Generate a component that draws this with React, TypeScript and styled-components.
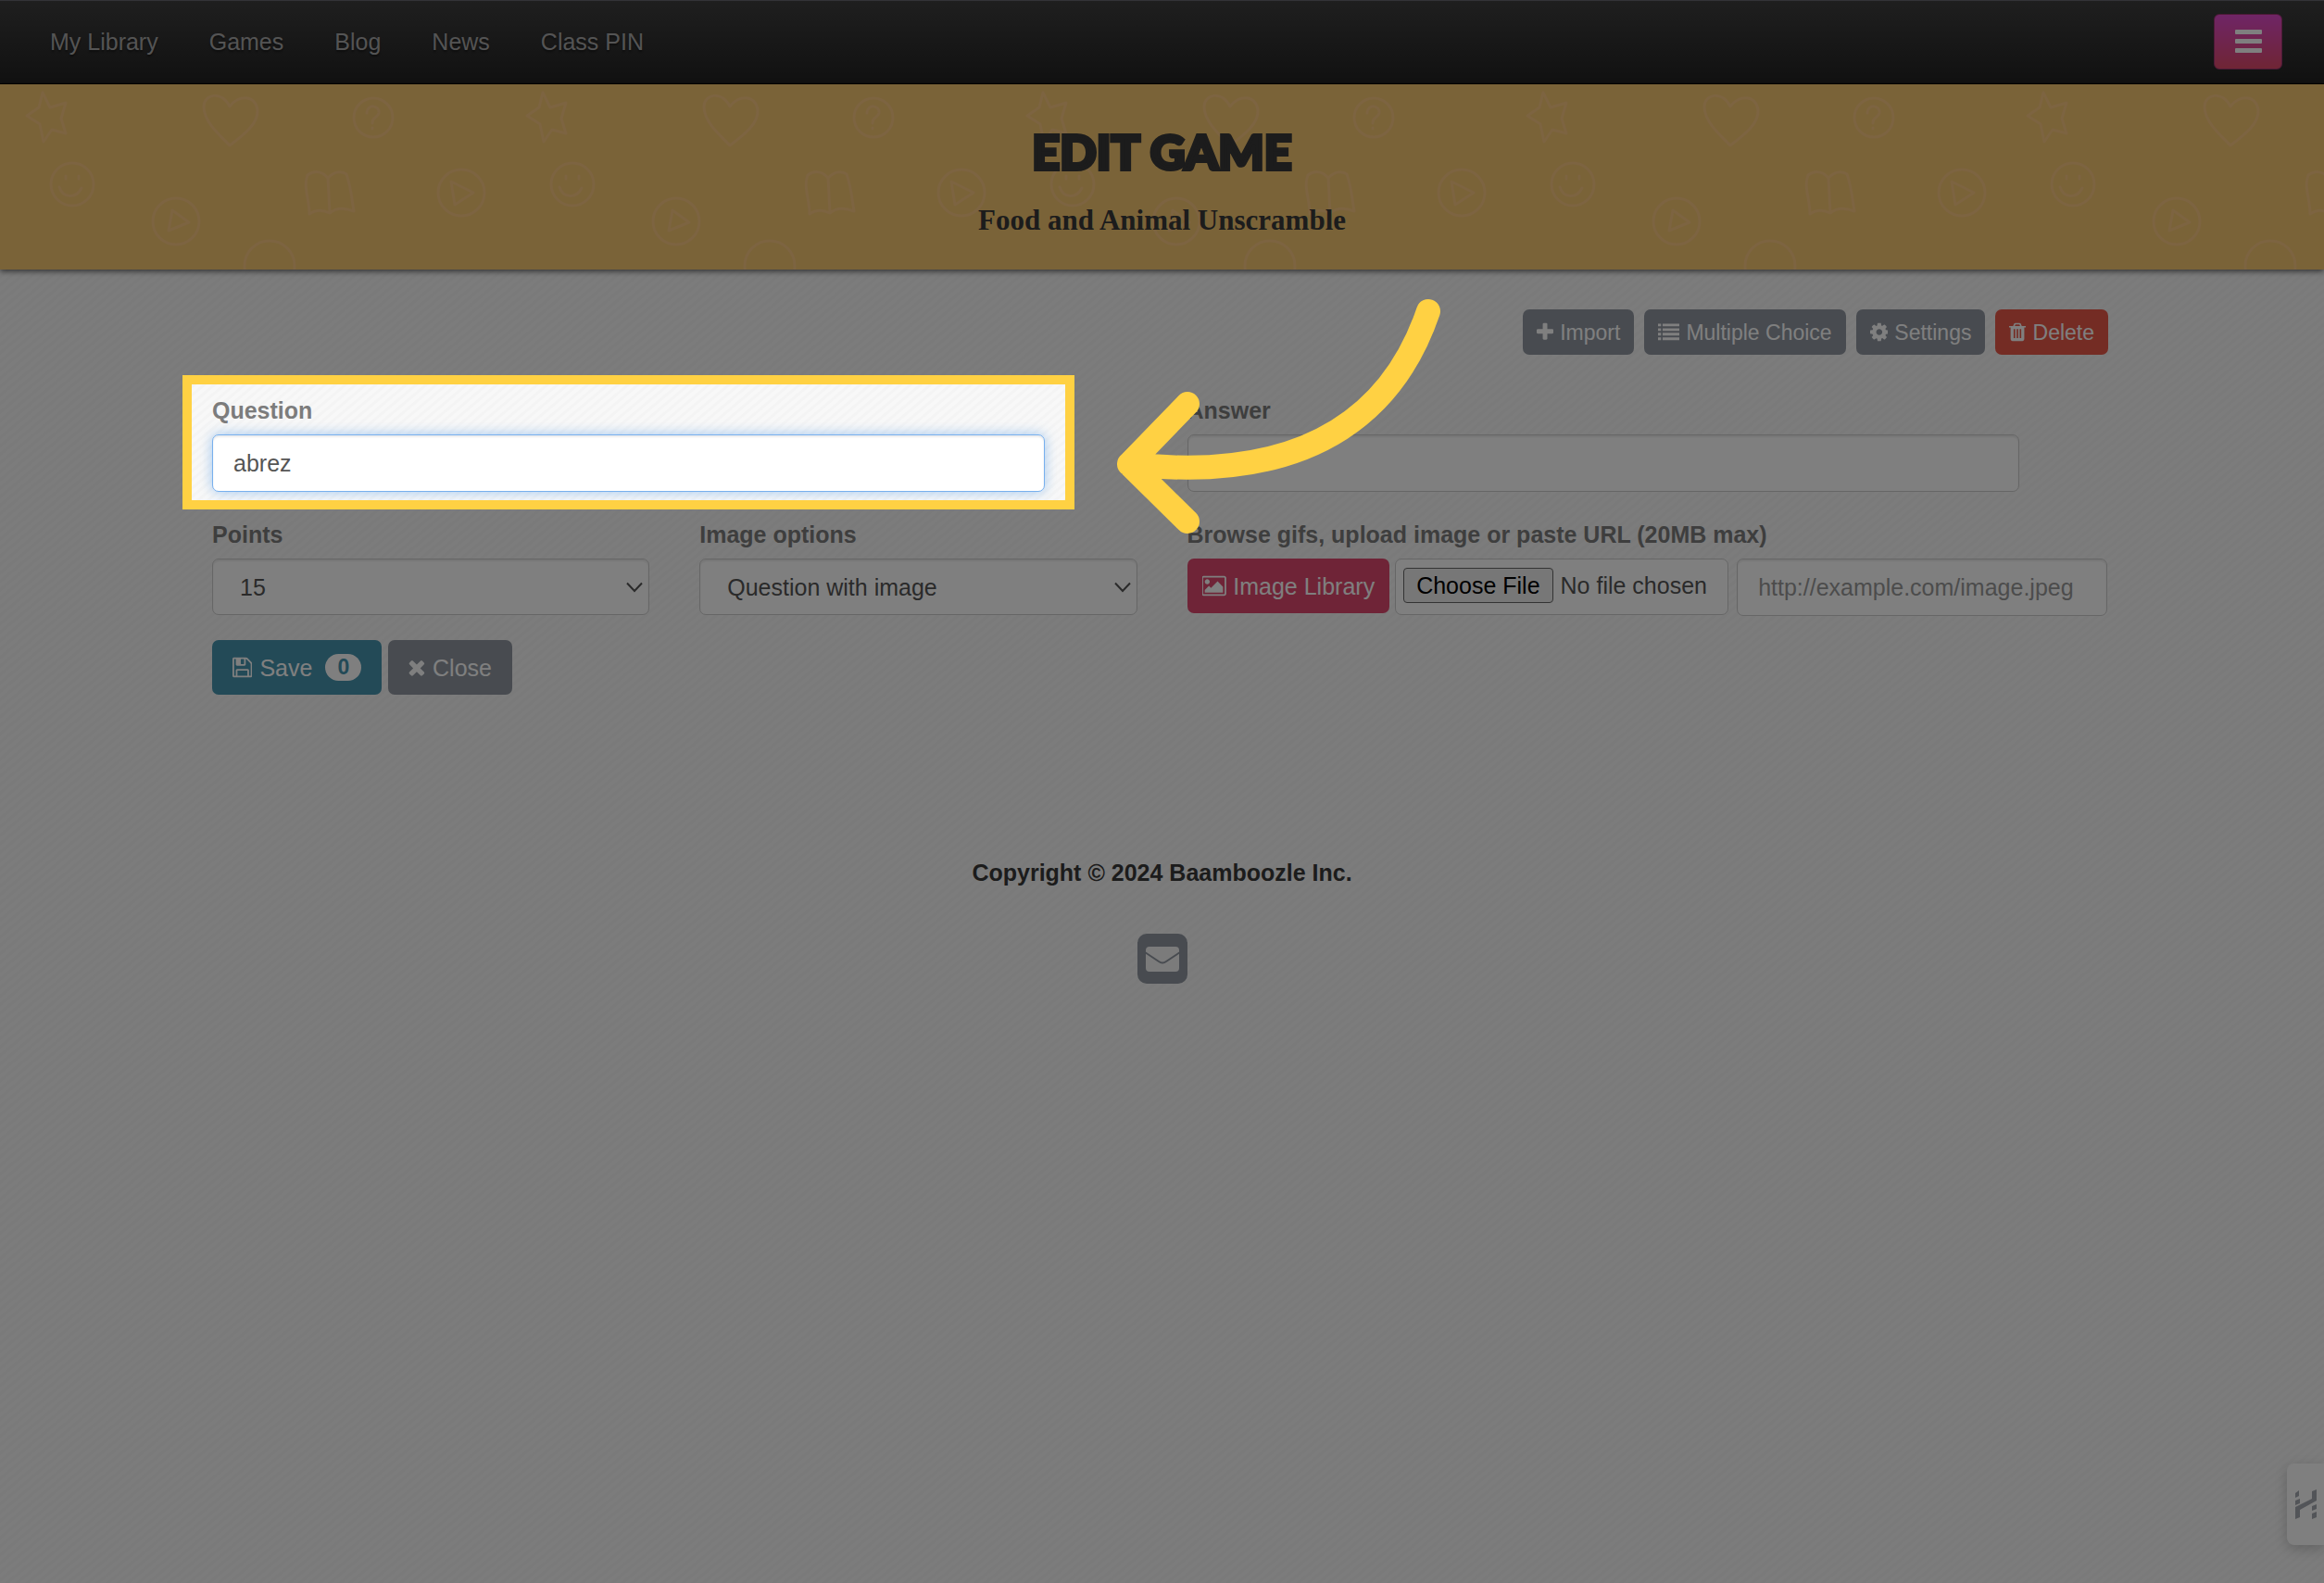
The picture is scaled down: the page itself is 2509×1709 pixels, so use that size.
import React from "react";
import styled, { createGlobalStyle } from "styled-components";

const sans = `"Liberation Sans", Arial, sans-serif`;

const GlobalStyle = createGlobalStyle`
  *, *::before, *::after { box-sizing: border-box; }
  body {
    margin: 0;
    font-family: ${sans};
    font-size: 25px;
    line-height: 36px;
    color: #383838;
    background-color: #f7f7f7;
    background-image: repeating-linear-gradient(
      140deg, #f8f8f8 0, #f8f8f8 3px, #f4f4f4 4px, #f4f4f4 6px, #f8f8f8 7px
    );
  }
  h1, h2, p { margin: 0; }
  button, input, select { font: inherit; }
`;

const Page = styled.div`
  position: relative;
  min-height: 100vh;
  overflow: hidden;
`;

const NavBar = styled.nav`
  display: flex;
  align-items: center;
  justify-content: space-between;
  height: 91px;
  padding: 0 45px 2px 54px;
  background: linear-gradient(#3e3e3e, #222);
  border-top: 1px solid #66666e;
  border-bottom: 1px solid #000;
`;

const NavLinks = styled.div`
  display: flex;
  gap: 55px;
`;

const NavLink = styled.a`
  color: #a8a8a8;
  text-decoration: none;
  text-shadow: 0 2px 2px rgba(0, 0, 0, 0.4);
`;

const MenuButton = styled.button`
  display: flex;
  align-items: center;
  justify-content: center;
  width: 74px;
  height: 60px;
  padding: 0;
  color: #fff;
  background: linear-gradient(#de4acc, #de4a6a);
  border: 1px solid #9c3470;
  border-radius: 6px;
`;

const Banner = styled.header`
  position: relative;
  padding: 42px 0 33px;
  text-align: center;
  background: #f4c670;
  box-shadow: 0 2px 6px rgba(0, 0, 0, 0.6);
`;

const Doodles = styled.svg`
  position: absolute;
  inset: 0;
  width: 100%;
  height: 100%;
`;

const Title = styled.h1`
  position: relative;
  margin-bottom: 25px;
  font-family: Lato, sans-serif;
  font-size: 52px;
  font-weight: 900;
  line-height: 60px;
  text-transform: uppercase;
  -webkit-text-stroke: 4px #383838;
`;

const Subtitle = styled.h2`
  position: relative;
  font-family: "Liberation Serif", serif;
  font-size: 31px;
  font-weight: 700;
  line-height: 40px;
`;

const Main = styled.main`
  padding: 43px 229px 0;
`;

const Toolbar = styled.div`
  display: flex;
  justify-content: flex-end;
  gap: 11px;
  margin: 0 4px 42px 0;
`;

const tones = {
  grey: "#9097a1",
  red: "#e95849",
  pink: "#df486e",
  teal: "#4694ae",
};

const Button = styled.button<{ $tone: keyof typeof tones; $size?: "small" | "snug" }>`
  display: flex;
  align-items: center;
  gap: ${(p) => (p.$size ? 7 : 8)}px;
  height: ${(p) => (p.$size === "small" ? 49 : 59)}px;
  padding: 0 ${(p) => (p.$size === "small" ? 15 : p.$size === "snug" ? 16 : 22)}px;
  font-size: ${(p) => (p.$size === "small" ? 23 : 25)}px;
  white-space: nowrap;
  color: #fff;
  background: ${(p) => tones[p.$tone]};
  border: 0;
  border-radius: 7px;
`;

const Badge = styled.span`
  margin-left: 6px;
  padding: 0 13px;
  font-size: 23px;
  font-weight: 700;
  line-height: 29px;
  color: #4694ae;
  background: #fff;
  border-radius: 15px;
`;

const Glyph = styled.svg`
  height: 1em;
  fill: currentColor;
  flex: none;
`;

const FormGrid = styled.form`
  display: grid;
  grid-template-columns: repeat(4, minmax(0, 1fr));
  gap: 28px 54px;
`;

const Cell = styled.div<{ $span?: number }>`
  position: relative;
  grid-column: span ${(p) => p.$span ?? 1};
`;

const Field = styled.div<{ $narrow?: boolean }>`
  position: relative;
  width: ${(p) => (p.$narrow ? "90%" : "auto")};
`;

const Label = styled.label`
  display: block;
  margin-bottom: 8px;
  font-weight: 700;
  color: #7c7c7c;
`;

const TextInput = styled.input<{ $active?: boolean }>`
  display: block;
  width: 100%;
  min-width: 0;
  height: 62px;
  padding: 0 22px;
  color: #555;
  background: #fff;
  border: 1px solid ${(p) => (p.$active ? "#78b0ee" : "#ccc")};
  border-radius: 7px;
  outline: 0;
  box-shadow: inset 0 2px 2px rgba(0, 0, 0, 0.08)
    ${(p) => (p.$active ? ", 0 0 14px rgba(100, 165, 235, 0.6)" : "")};
  &::placeholder { color: #999; opacity: 1; }
`;

const Select = styled.select`
  display: block;
  width: 100%;
  height: 61px;
  padding: 0 29px;
  color: #555;
  appearance: none;
  background: #fff
    url("data:image/svg+xml,%3Csvg xmlns='http://www.w3.org/2000/svg' width='18' height='12'%3E%3Cpath d='M1 1.500l8 8.500 8-8.500' fill='none' stroke='%23555' stroke-width='2'/%3E%3C/svg%3E")
    no-repeat right 6px center;
  border: 1px solid #ccc;
  border-radius: 7px;
  box-shadow: inset 0 2px 2px rgba(0, 0, 0, 0.08);
`;

const UploadRow = styled.div`
  display: flex;
  padding-right: 5px;
`;

const FileInput = styled.input`
  flex: none;
  width: 360px;
  height: 61px;
  margin: 0 9px 0 6px;
  padding: 9px 8px;
  color: #555;
  background: #fff;
  border: 1px solid #ccc;
  border-radius: 7px;
  &::file-selector-button {
    height: 38px;
    margin: 0 8px 0 0;
    padding: 0 13px;
    font: inherit;
    line-height: 34px;
    color: #000;
    background: #efefef;
    border: 1px solid #666;
    border-radius: 4px;
  }
`;

const Actions = styled.div`
  display: flex;
  gap: 7px;
  margin-top: 26px;
`;

/* Tutorial spotlight: dims everything outside of the framed field. */
const Spotlight = styled.div`
  position: absolute;
  z-index: 10;
  inset: -20px -32px -19px;
  border: 10px solid #ffd143;
  box-shadow: 0 0 0 4000px rgba(0, 0, 0, 0.5);
  pointer-events: none;
`;

const Arrow = styled.svg`
  position: absolute;
  z-index: 11;
  top: -107px;
  left: -82px;
  width: 360px;
  height: 262px;
  fill: none;
  stroke: #ffd143;
  stroke-width: 26px;
  stroke-linecap: round;
  stroke-linejoin: round;
  pointer-events: none;
`;

const Footer = styled.footer`
  display: flex;
  flex-direction: column;
  align-items: center;
  gap: 48px;
  margin-top: 174px;
  font-weight: 700;
`;

const MailLink = styled.a`
  display: block;
  height: 54px;
`;

const SideTab = styled.button`
  position: fixed;
  z-index: 5;
  right: 0;
  bottom: 41px;
  display: flex;
  align-items: center;
  width: 40px;
  height: 88px;
  padding: 0 0 0 9px;
  background: #fff;
  border: 0;
  border-radius: 8px 0 0 8px;
  box-shadow: 0 4px 14px rgba(0, 0, 0, 0.2);
`;

const glyphs = {
  plus: ["192 0 1408 1792", "M1600 736v192q0 40-28 68t-68 28h-416v416q0 40-28 68t-68 28h-192q-40 0-68-28t-28-68v-416h-416q-40 0-68-28t-28-68v-192q0-40 28-68t68-28h416v-416q0-40 28-68t68-28h192q40 0 68 28t28 68v416h416q40 0 68 28t28 68z"],
  list: ["0 0 1792 1792", "M0 192h256v224H0zM384 192h1408v224H384zM0 576h256v224H0zM384 576h1408v224H384zM0 960h256v224H0zM384 960h1408v224H384zM0 1344h256v224H0zM384 1344h1408v224H384z"],
  cog: ["128 0 1536 1792", "M1152 896q0-106-75-181t-181-75-181 75-75 181 75 181 181 75 181-75 75-181zm512-109v222q0 12-8 23t-20 13l-185 28q-19 54-39 91 35 50 107 138 10 12 10 25t-9 23q-27 37-99 108t-94 71q-12 0-26-9l-138-108q-44 23-91 38-16 136-29 186-7 28-36 28h-222q-14 0-24.500-8.500t-11.500-21.500l-28-184q-49-16-90-37l-141 107q-10 9-25 9-14 0-25-11-126-114-165-168-7-10-7-23 0-12 8-23 15-21 51-66.500t54-70.500q-27-50-41-99l-183-27q-13-2-21-12.500t-8-23.500v-222q0-12 8-23t19-13l186-28q14-46 39-92-40-57-107-138-10-12-10-24 0-10 9-23 26-36 98.500-107.500t94.500-71.500q13 0 26 10l138 107q44-23 91-38 16-136 29-186 7-28 36-28h222q14 0 24.500 8.500t11.500 21.500l28 184q49 16 90 37l142-107q9-9 24-9 13 0 25 10 129 119 165 170 7 8 7 22 0 12-8 23-15 21-51 66.500t-54 70.500q26 50 41 98l183 28q13 2 21 12.500t8 23.500z"],
  trash: ["192 0 1408 1792", "M704 1376v-704q0-14-9-23t-23-9h-64q-14 0-23 9t-9 23v704q0 14 9 23t23 9h64q14 0 23-9t9-23zm256 0v-704q0-14-9-23t-23-9h-64q-14 0-23 9t-9 23v704q0 14 9 23t23 9h64q14 0 23-9t9-23zm256 0v-704q0-14-9-23t-23-9h-64q-14 0-23 9t-9 23v704q0 14 9 23t23 9h64q14 0 23-9t9-23zm-544-992h448l-48-117q-7-9-17-11h-317q-10 2-17 11zm928 32v64q0 14-9 23t-23 9h-96v948q0 83-47 143.500t-113 60.500h-832q-66 0-113-58.500t-47-141.500v-952h-96q-14 0-23-9t-9-23v-64q0-14 9-23t23-9h309l70-167q15-37 54-63t79-26h320q40 0 79 26t54 63l70 167h309q14 0 23 9t9 23z"],
  image: ["0 0 1920 1792", "M576 576q0 80-56 136t-136 56-136-56-56-136 56-136 136-56 136 56 56 136zm1024 384v448h-1408v-192l320-320 160 160 512-512zm96-704h-1600q-13 0-22.500 9.500t-9.500 22.500v1216q0 13 9.500 22.500t22.500 9.500h1600q13 0 22.500-9.500t9.500-22.500v-1216q0-13-9.500-22.500t-22.500-9.500zm160 32v1216q0 66-47 113t-113 47h-1600q-66 0-113-47t-47-113v-1216q0-66 47-113t113-47h1600q66 0 113 47t47 113z"],
  save: ["128 0 1536 1792", "M512 1536h768v-384h-768v384zm896 0h128v-896q0-14-10-38.500t-20-34.500l-281-281q-10-10-34-20t-39-10v416q0 40-28 68t-68 28h-576q-40 0-68-28t-28-68v-416h-128v1280h128v-416q0-40 28-68t68-28h832q40 0 68 28t28 68v416zm-384-928v-320q0-13-9.500-22.500t-22.500-9.500h-192q-13 0-22.500 9.500t-9.500 22.500v320q0 13 9.500 22.500t22.500 9.500h192q13 0 22.500-9.500t9.500-22.500zm640 32v928q0 40-28 68t-68 28h-1344q-40 0-68-28t-28-68v-1344q0-40 28-68t68-28h928q40 0 88 20t76 48l280 280q28 28 48 76t20 88z"],
  times: ["256 0 1280 1792", "M1490 1322q0 40-28 68l-136 136q-28 28-68 28t-68-28l-294-294-294 294q-28 28-68 28t-68-28l-136-136q-28-28-28-68t28-68l294-294-294-294q-28-28-28-68t28-68l136-136q28-28 68-28t68 28l294 294 294-294q28-28 68-28t68 28l136 136q28 28 28 68t-28 68l-294 294 294 294q28 28 28 68z"],
} as const;

function Icon({ name }: { name: keyof typeof glyphs }) {
  const [box, d] = glyphs[name];
  return (
    <Glyph viewBox={box} aria-hidden="true">
      <path d={d} />
    </Glyph>
  );
}

function BannerDoodles() {
  return (
    <Doodles aria-hidden="true">
      <defs>
        <pattern id="doodles" width="540" height="200" patternUnits="userSpaceOnUse">
          <g fill="none" stroke="#fac882" strokeWidth="3" strokeLinejoin="round" strokeLinecap="round">
            <path d="M46 9l8 16 17-5-5 17 5 16-15-4-9 13-4-19-14-9 13-9z" />
            <path d="M248 66c-12-12-28-26-28-42 0-13 19-18 28 0 8-12 28-14 30 4 1 14-14 26-30 38z" />
            <circle cx="403" cy="36" r="21" />
            <path d="M396 31c0-10 14-9 13 0-1 5-8 5-7 11m0 5v1" />
            <circle cx="78" cy="108" r="23" />
            <path d="M71 99v3m14-3v3m-21 9c4 12 18 13 24 1" />
            <circle cx="190" cy="148" r="25" />
            <path d="M186 136l18 13-22 9z" />
            <path d="M354 101c-7-8-15-8-22-3-5 12 2 26 2 42 7-5 14-5 22-1 7-6 16-6 26-2-2-12-3-26-8-40-7-4-13-3-20 4zm0 0l2 38" />
            <circle cx="498" cy="117" r="25" />
            <path d="M487 105l24 12-20 13z" />
            <circle cx="291" cy="196" r="27" />
          </g>
        </pattern>
      </defs>
      <rect width="100%" height="100%" fill="url(#doodles)" />
    </Doodles>
  );
}

const links = ["My Library", "Games", "Blog", "News", "Class PIN"];

export default function App() {
  return (
    <Page>
      <GlobalStyle />
      <NavBar>
        <NavLinks>
          {links.map((text) => (
            <NavLink key={text} href="#">{text}</NavLink>
          ))}
        </NavLinks>
        <MenuButton type="button" aria-label="Menu">
          <svg width="29" height="25" fill="currentColor" aria-hidden="true">
            <rect width="29" height="5" rx="1" />
            <rect y="10" width="29" height="5" rx="1" />
            <rect y="20" width="29" height="5" rx="1" />
          </svg>
        </MenuButton>
      </NavBar>

      <Banner>
        <BannerDoodles />
        <Title>Edit Game</Title>
        <Subtitle>Food and Animal Unscramble</Subtitle>
      </Banner>

      <Main>
        <Toolbar>
          <Button type="button" $tone="grey" $size="small"><Icon name="plus" />Import</Button>
          <Button type="button" $tone="grey" $size="small"><Icon name="list" />Multiple Choice</Button>
          <Button type="button" $tone="grey" $size="small"><Icon name="cog" />Settings</Button>
          <Button type="button" $tone="red" $size="small"><Icon name="trash" />Delete</Button>
        </Toolbar>

        <FormGrid id="question-form" onSubmit={(e) => e.preventDefault()}>
          <Cell $span={2}>
            <Field $narrow>
              <Label htmlFor="question">Question</Label>
              <TextInput id="question" defaultValue="abrez" $active />
              <Spotlight />
            </Field>
          </Cell>
          <Cell $span={2}>
            <Field $narrow>
              <Label htmlFor="answer">Answer</Label>
              <TextInput id="answer" />
            </Field>
            <Arrow viewBox="60 18 360 262" aria-hidden="true">
              <path d="M402 36C370 130 290 225 79 201M142 136L79 201L142 263" />
            </Arrow>
          </Cell>
          <Cell>
            <Label htmlFor="points">Points</Label>
            <Select id="points" defaultValue="15">
              <option>5</option>
              <option>10</option>
              <option>15</option>
              <option>20</option>
            </Select>
          </Cell>
          <Cell>
            <Label htmlFor="image-options">Image options</Label>
            <Select id="image-options">
              <option>Question with image</option>
            </Select>
          </Cell>
          <Cell $span={2}>
            <Label htmlFor="image-url">Browse gifs, upload image or paste URL (20MB max)</Label>
            <UploadRow>
              <Button type="button" $tone="pink" $size="snug"><Icon name="image" />Image Library</Button>
              <FileInput type="file" aria-label="Upload image" />
              <TextInput id="image-url" placeholder="http://example.com/image.jpeg" />
            </UploadRow>
          </Cell>
        </FormGrid>

        <Actions>
          <Button type="submit" form="question-form" $tone="teal">
            <Icon name="save" />Save<Badge>0</Badge>
          </Button>
          <Button type="button" $tone="grey"><Icon name="times" />Close</Button>
        </Actions>
      </Main>

      <Footer>
        <p>Copyright © 2024 Baamboozle Inc.</p>
        <MailLink href="#" aria-label="Email">
          <svg width="54" height="54" aria-hidden="true">
            <rect width="54" height="54" rx="10" fill="#9097a1" />
            <rect x="9" y="14" width="36" height="27" rx="4" fill="#f7f7f7" />
            <path d="M8 20l15 10q4 3 8 0l15-10" fill="none" stroke="#9097a1" strokeWidth="2" />
          </svg>
        </MailLink>
      </Footer>

      <SideTab type="button" aria-label="Open helper">
        <svg width="23" height="32" fill="#a5a8b0" aria-hidden="true">
          <path d="M0 4l4-3v6l-4 2zM0 12l5-2v5l-5 2zM18 2l5-2v12L5 22v8l-5 2V19l18-9zM18 18l5-2v5l-5 2zM18 26l5-2v6l-5 2z" />
        </svg>
      </SideTab>
    </Page>
  );
}
